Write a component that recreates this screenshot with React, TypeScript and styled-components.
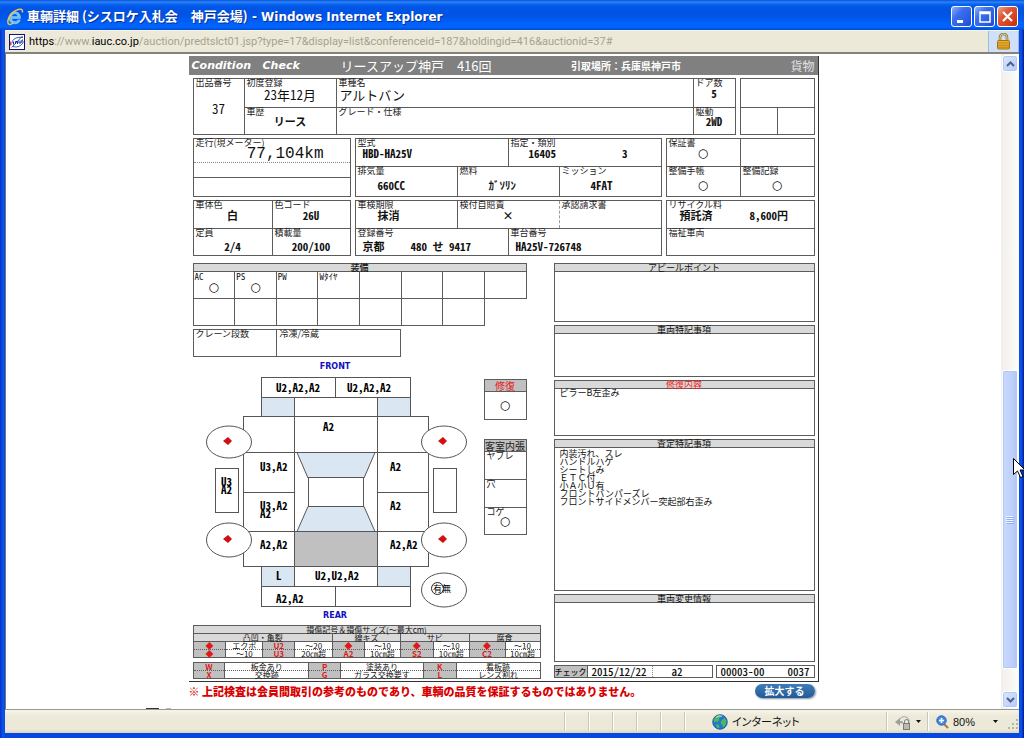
import React from "react";
import styled, { createGlobalStyle, css } from "styled-components";

const LINE = "#5c5c5c";
const JP = `"Noto Sans CJK JP", "Liberation Sans", sans-serif`;

const GlobalStyle = createGlobalStyle`
  * { box-sizing: border-box; }
  body { margin: 0; background: #fff; font-family: ${JP}; color: #111; }
  dl, dt, dd, h1, h2, p, ul { margin: 0; padding: 0; font-weight: inherit; }
  button { font: inherit; padding: 0; margin: 0; border: 0; background: none; color: inherit; }
  table { border-collapse: collapse; border-spacing: 0; }
  svg { display: block; }
`;

/* ---------- window frame ---------- */

const Window = styled.div`
  height: 100vh;
  min-height: 738px;
  display: flex;
  flex-direction: column;
  background: #0a45dd;
  overflow: hidden;
`;

const TitleBar = styled.header`
  flex: none;
  height: 30px;
  display: flex;
  align-items: center;
  gap: 3px;
  padding: 3px 6px 0;
  color: #fff;
  background: linear-gradient(#0a4fd8 0, #2a86f8 7%, #0b62ee 14%, #0056e6 24%, #0053e3 48%, #005df4 70%, #0066ff 88%, #005cf4 94%, #0048d0 100%);
`;

const WindowTitle = styled.h1`
  flex: 1;
  min-width: 0;
  font-size: 13px;
  line-height: 20px;
  font-weight: 700;
  white-space: pre;
  text-shadow: 1px 1px 0 #0a2f9a;
`;

const LatinTitle = styled.span`
  font-family: "DejaVu Sans", sans-serif;
  font-size: 12px;
`;

const WindowButtons = styled.div`
  display: flex;
  gap: 2px;
`;

const WindowButton = styled.button<{ $close?: boolean }>`
  width: 21px;
  height: 21px;
  display: grid;
  place-items: center;
  border: 1px solid #fff;
  border-radius: 3px;
  background: ${(p) =>
    p.$close
      ? "linear-gradient(135deg, #f0a58c 0, #e0583a 35%, #d23a17 80%, #b8300f 100%)"
      : "linear-gradient(135deg, #8db0fb 0, #3c6fee 35%, #2a5be2 75%, #2048c4 100%)"};
`;

const Frame = styled.div`
  flex: 1;
  min-height: 0;
  display: flex;
  flex-direction: column;
  padding: 0 5px 5px;
  background: linear-gradient(90deg, #0831c8 0, #0c55ee 3px, #0848e0 5px, #0848e0 calc(100% - 5px), #0c55ee calc(100% - 3px), #001a9c 100%);
`;

const AddressBar = styled.div`
  flex: none;
  height: 24px;
  display: flex;
  align-items: center;
  background: #ece9d8;
  border-top: 1px solid #f8f6ec;
  border-bottom: 2px solid #85827a;
  padding-left: 4px;
`;

const Url = styled.div`
  flex: 1;
  min-width: 0;
  margin-left: 4px;
  font: 11px/20px Roboto, "Liberation Sans", sans-serif;
  color: #a5a292;
  white-space: nowrap;
  b { font-weight: 400; color: #000; }
`;

const LockButton = styled.button`
  width: 31px;
  height: 21px;
  display: grid;
  place-items: center;
  border: 1px solid #9dbbe0;
  border-width: 0 1px;
  background: #cfe0f8;
`;

const Viewport = styled.div`
  flex: 1;
  min-height: 0;
  display: flex;
  background: #fff;
  border-left: 1px solid #77746b;
`;

const Page = styled.main`
  flex: 1;
  min-width: 0;
  overflow: hidden;
  padding-top: 2px;
`;

/* ---------- scroll bar ---------- */

const ScrollBar = styled.div`
  flex: none;
  width: 18px;
  display: flex;
  flex-direction: column;
  padding: 1px;
  background: linear-gradient(90deg, #f1efe8, #fdfdfa);
`;

const ScrollArrow = styled.button`
  flex: none;
  height: 17px;
  display: grid;
  place-items: center;
  border: 1px solid #fff;
  border-radius: 3px;
  background: linear-gradient(135deg, #dbe6fe, #b6cbfa);
  box-shadow: inset 0 0 0 1px #b4c8f6;
`;

const ScrollTrack = styled.div`
  flex: 1;
  display: flex;
  flex-direction: column;
`;

const ScrollSpace = styled.div<{ $share: number }>`
  flex: ${(p) => p.$share} 0 0;
`;

const ScrollThumb = styled.div`
  flex: 298 0 0;
  display: grid;
  place-items: center;
  border: 1px solid #fff;
  border-radius: 2px;
  background: linear-gradient(90deg, #c9d8fd, #bccffb 70%, #b0c5f5);
  box-shadow: inset 0 0 0 1px #b4c8f6;
`;

const Pointer = styled.svg`
  position: fixed;
  right: 0;
  top: 457px;
`;

/* ---------- inspection sheet ---------- */

const Content = styled.div`
  width: 100%;
  max-width: 630px;
  margin: 0 auto;
`;

const Sheet = styled.article`
  border-right: 1px solid #333;
  border-bottom: 1px solid #333;
  padding-bottom: 2px;
`;

const SheetHead = styled.header`
  height: 19px;
  display: grid;
  grid-template-columns: 150fr 232fr 201fr 44fr;
  align-items: center;
  padding: 0 3px;
  color: #fff;
  background: #808080;
  font-size: 13px;
  line-height: 19px;
  white-space: pre;
`;

const Brand = styled.span`
  font: italic 700 11px/19px "DejaVu Sans", sans-serif;
`;

const Place = styled.span`
  font-size: 10px;
  font-weight: 700;
`;

const Category = styled.span`
  font-size: 12px;
  text-align: right;
  color: #e4e4e4;
`;

const Blocks = styled.div`
  display: grid;
  gap: 3px;
  padding: 3px 3px 0 4px;
`;

const Row = styled.div<{ $cols: string }>`
  display: grid;
  grid-template-columns: ${(p) => p.$cols};
  gap: 4px;
`;

const Panel = styled.dl<{ $cols: string; $rows: string }>`
  display: grid;
  grid-template-columns: ${(p) => p.$cols};
  grid-template-rows: ${(p) => p.$rows};
  gap: 1px;
  border: 1px solid ${LINE};
  background: ${LINE};
`;

const Cell = styled.div<{ $span?: number; $tall?: boolean; $dash?: "left" | "bottom" }>`
  min-width: 0;
  display: flex;
  flex-direction: column;
  background: #fff;
  ${(p) => p.$span && css`grid-column: span ${p.$span};`}
  ${(p) => p.$tall && css`grid-row: span 2;`}
  ${(p) => p.$dash === "left" && css`margin-left: -1px; border-left: 1px dashed #999;`}
  ${(p) => p.$dash === "bottom" && css`margin-bottom: -1px; border-bottom: 1px dotted #888;`}
`;

const Label = styled.dt`
  flex: none;
  padding-left: 2px;
  font-size: 9px;
  line-height: 8px;
  color: #222;
  white-space: nowrap;
`;

type ValueProps = { $big?: boolean; $indent?: number; $gap?: number; $up?: boolean };

const Value = styled.dd<ValueProps>`
  flex: 1;
  display: flex;
  align-items: center;
  justify-content: ${(p) => (p.$indent ? "flex-start" : "center")};
  gap: ${(p) => p.$gap ?? 0}px;
  padding-left: ${(p) => p.$indent ?? 0}px;
  padding-bottom: ${(p) => (p.$up ? 7 : p.$big ? 5 : 0)}px;
  font-size: ${(p) => (p.$big ? 13 : 11)}px;
  line-height: 11px;
  font-weight: ${(p) => (p.$big ? 400 : 700)};
  font-feature-settings: "hwid" 1;
  white-space: pre;
`;

const Mileage = styled.dd`
  flex: 1;
  display: flex;
  align-items: center;
  justify-content: flex-end;
  padding-right: 26px;
  font: 16px/15px "Liberation Mono", monospace;
`;

const Circle = styled.span`
  font: 12px/11px "DejaVu Sans", sans-serif;
  color: #000;
`;

const show = (value: string) => (value === "○" ? <Circle>{value}</Circle> : value);

const Field = ({
  label,
  value,
  span,
  tall,
  dash,
  ...look
}: {
  label?: string;
  value?: string | string[];
  span?: number;
  tall?: boolean;
  dash?: "left" | "bottom";
} & ValueProps) => (
  <Cell $span={span} $tall={tall} $dash={dash}>
    {label && <Label>{label}</Label>}
    {value && (
      <Value {...look}>
        {Array.isArray(value) ? value.map((v) => <span key={v}>{v}</span>) : show(value)}
      </Value>
    )}
  </Cell>
);

/* ---------- lower half ---------- */

const Lower = styled.div`
  display: grid;
  grid-template-columns: 348fr 261fr;
  gap: 13px;
  padding: 7px 3px 0 4px;
`;

const LeftColumn = styled.div`
  display: flex;
  flex-direction: column;
`;

const RightColumn = styled.div`
  display: flex;
  flex-direction: column;
  gap: 3px;
`;

const EquipTable = styled.table`
  width: 96%;
  table-layout: fixed;
  th, td {
    border: 1px solid ${LINE};
    padding: 0;
    vertical-align: top;
  }
  thead th {
    height: 8px;
    font-size: 9px;
    line-height: 7px;
    font-weight: 500;
    background: #d9d9d9;
  }
  tbody td { height: 27px; }
`;

const EquipName = styled.div`
  font-size: 9px;
  line-height: 9px;
  padding-left: 1px;
  font-feature-settings: "hwid" 1;
`;

const Mark = styled.div`
  display: flex;
  justify-content: center;
  padding-top: 1px;
`;

const CranePanel = styled(Panel)`
  width: 60%;
  margin-top: 3px;
`;

const DiagramArea = styled.section`
  display: flex;
  justify-content: space-between;
  padding: 3px 14px 0 0;
`;

const Diagram = styled.svg`
  flex: 0 1 276px;
  min-width: 0;
  font-family: ${JP};
  .note {
    font-size: 11px;
    font-weight: 700;
    font-feature-settings: "hwid" 1;
  }
  .end {
    font: 700 8px "DejaVu Sans", sans-serif;
    fill: #1010c0;
    text-anchor: middle;
  }
`;

const Checks = styled.div`
  flex: none;
  width: 43px;
  padding-top: 19px;
  display: flex;
  flex-direction: column;
  gap: 19px;
`;

const CheckTitle = styled.dt<{ $red?: boolean }>`
  font-size: 10px;
  line-height: 11px;
  text-align: center;
  white-space: nowrap;
  background: #c0c0c0;
  color: ${(p) => (p.$red ? "#e82020" : "#222")};
`;

/* ---------- damage legend ---------- */

const Legend = styled.table`
  width: 100%;
  table-layout: fixed;
  border: 1px solid ${LINE};
  font-size: 8px;
  line-height: 7px;
  text-align: center;
  th, td {
    height: 8px;
    padding: 0;
    border: 1px solid ${LINE};
    font-weight: 400;
    white-space: nowrap;
  }
  tbody th {
    background: #c0c0c0;
    color: #e01818;
    font-weight: 700;
  }
  tbody th, tbody td { border-style: dotted solid; }
`;

const LegendTitle = styled.th`
  background: #d9d9d9;
`;

const LegendGroup = styled.th`
  background: #d9d9d9;
`;

const CodeTable = styled(Legend)`
  margin-top: 4px;
`;

/* ---------- right column ---------- */

const Box = styled.section<{ $height: number }>`
  min-height: ${(p) => p.$height}px;
  border: 1px solid ${LINE};
`;

const BoxTitle = styled.h2<{ $red?: boolean }>`
  height: 8px;
  border-bottom: 1px solid ${LINE};
  background: #d9d9d9;
  font-size: 9px;
  line-height: 7px;
  text-align: center;
  color: ${(p) => (p.$red ? "#f02424" : "#111")};
`;

const Remark = styled.p`
  padding-left: 5px;
  font-size: 9px;
  line-height: 8px;
  color: #111;
`;

const Remarks = styled.div`
  padding-top: 2px;
`;

const CheckRow = styled.div`
  display: grid;
  grid-template-columns: 159fr 99fr;
  gap: 3px;
`;

const CheckPanel = styled.div<{ $cols: string }>`
  height: 13px;
  display: grid;
  grid-template-columns: ${(p) => p.$cols};
  align-items: stretch;
  border: 1px solid ${LINE};
  font-size: 11px;
  line-height: 11px;
  font-weight: 500;
  font-feature-settings: "hwid" 1;
  white-space: nowrap;
  span { padding-left: 4px; }
  span + span + span { padding-left: 18px; border-left: 1px dotted #888; }
`;

const CheckLabel = styled.span`
  && { padding: 0; }
  font-size: 8px;
  text-align: center;
  background: #c0c0c0;
  border-right: 1px solid ${LINE};
`;

const Serial = styled.div`
  height: 13px;
  display: flex;
  justify-content: space-between;
  padding: 0 4px;
  border: 1px solid ${LINE};
  font-size: 11px;
  line-height: 11px;
  font-weight: 500;
  font-feature-settings: "hwid" 1;
`;

/* ---------- below the sheet ---------- */

const Notice = styled.div`
  display: flex;
  justify-content: space-between;
  align-items: center;
  height: 17px;
  padding-right: 4px;
`;

const Warning = styled.p`
  font-size: 11px;
  line-height: 16px;
  font-weight: 900;
  color: #d80000;
`;

const EnlargeButton = styled.button`
  width: 60px;
  height: 14px;
  border-radius: 7px;
  background: linear-gradient(#3f7cba, #235a96);
  box-shadow: 1px 1px 2px #8a96a4;
  color: #fff;
  font-size: 10px;
  line-height: 13px;
  font-weight: 700;
`;

const NextLine = styled.div`
  height: 1px;
  margin: 9px 0 0 140px;
  display: flex;
  gap: 7px;
  i { width: 13px; background: #333; }
  i + i { width: 5px; background: #bbb; }
`;

/* ---------- status bar ---------- */

const StatusBar = styled.footer`
  flex: none;
  height: 24px;
  display: flex;
  align-items: stretch;
  border-top: 1px solid #9b988c;
  background: linear-gradient(#f6f4ea, #ece9d8 30%, #ece9d8 85%, #dad6c4);
  font-size: 12px;
  line-height: 23px;
`;

const StatusPane = styled.div<{ $width: number }>`
  flex: 0 1 ${(p) => p.$width}px;
  display: flex;
  align-items: center;
  gap: 4px;
  margin: 2px 0;
  border-left: 1px solid #cbc7b4;
  box-shadow: inset 1px 0 0 #fff;
`;

const StatusMessage = styled.div`
  flex: 1;
`;

const Zone = styled(StatusPane)`
  padding-left: 27px;
  font-size: 11px;
  font-feature-settings: "palt" 1;
`;

const StatusButton = styled.button`
  display: flex;
  align-items: center;
  gap: 4px;
  padding-left: 8px;
  font: 11px/18px "Liberation Sans", sans-serif;
`;

const ZoomText = styled.span`
  width: 36px;
  text-align: left;
`;

const Grip = styled.svg`
  margin-left: auto;
  align-self: flex-end;
`;

const IeLogo = () => (
  <svg width="18" height="18" viewBox="0 0 18 18" aria-hidden="true">
    <path d="M14.5 10.5H5.6c.2 2 1.600 3 3.300 3 1.300 0 2.300-.6 2.900-1.600h2.500c-.8 2.500-2.900 3.900-5.400 3.900-3.400 0-5.900-2.500-5.900-5.900s2.500-6.100 5.900-6.100c3.600 0 5.900 2.800 5.600 6.700zM5.700 8.400h6.100C11.500 6.700 10.400 5.800 8.800 5.800S6 6.700 5.700 8.400z" fill="#6cc2f6" stroke="#cdeaff" strokeWidth=".4" />
    <path d="M3.500 16.500C-.5 15.500 3 6 10 2.300 14 .3 17.300.8 16.300 4.500M3.500 16.500c1.200.3 2.500-.5 3.800-1.300" fill="none" stroke="#ecc54e" strokeWidth="1.500" />
  </svg>
);

const SiteIcon = () => (
  <svg width="16" height="16" viewBox="0 0 16 16" aria-hidden="true">
    <rect x=".5" y=".5" width="15" height="15" fill="#fff" stroke="#10107c" />
    <path d="M3 9C3 5 8 2.500 14 3.500M4 12.500c5 1.500 9-1 10.500-5M2.500 13.500L13.500 2" fill="none" stroke="#2a55b0" strokeWidth="1" />
    <path d="M4.500 7.500v3M6.500 10V7.500h2V10M10 6.500v2.500h2V6.500M14 6h-1v2.500" fill="none" stroke="#1a2e98" strokeWidth="1" />
    <path d="M1 7l2 3-2 2z" fill="#e33" />
  </svg>
);

const LockIcon = () => (
  <svg width="15" height="17" viewBox="0 0 15 17" aria-hidden="true">
    <path d="M4 8V4.500a3.500 3.500 0 0 1 7 0V8" fill="none" stroke="#8a7a3a" strokeWidth="2.600" />
    <path d="M4 8V4.500a3.500 3.500 0 0 1 7 0V8" fill="none" stroke="#e6d690" strokeWidth="1" />
    <rect x="1.500" y="7.500" width="12" height="8.500" rx="1" fill="#e9ae2a" stroke="#a87412" />
    <path d="M2 10h11M2 12.300h11M2 14.300h11" stroke="#b9801a" strokeWidth=".8" />
  </svg>
);

const Globe = () => (
  <svg width="16" height="16" viewBox="0 0 16 16" aria-hidden="true">
    <circle cx="8" cy="8" r="7.300" fill="#2677cf" stroke="#1b4f96" strokeWidth=".8" />
    <path d="M2 5c1.500-2.600 4-4 6-3.800l1 1.600-2 1.400.4 2L5 8 3.500 7.500 2 9zM9.500 6.500l3-2.500 2 3.200-1.200 4.600-2.300 1.400-1-3-1.500-1zM4.500 10l2.500 1 .4 2.200-1 1.400C4.800 14 3.800 12 4.500 10z" fill="#4cb85a" />
    <path d="M4 3.500C6 1.800 8.500 1.600 10 2.400" stroke="#cfeaff" strokeWidth="1.200" fill="none" opacity=".7" />
  </svg>
);

const Caret = () => (
  <svg width="5" height="3" viewBox="0 0 5 3" aria-hidden="true">
    <path d="M0 0h5L2.500 3z" fill="#111" />
  </svg>
);

const wheels: [number, number, number][] = [
  [36, 82, 16],
  [251, 82, 16],
  [36, 180, 17],
  [251, 180, 17],
];

const notes: [number, number, string][] = [
  [83, 32, "U2,A2,A2"],
  [154, 32, "U2,A2,A2"],
  [130, 71, "A2"],
  [67, 111, "U3,A2"],
  [197, 111, "A2"],
  [28, 126, "U3"],
  [28, 134, "A2"],
  [67, 150, "U3,A2"],
  [67, 158, "A2"],
  [197, 150, "A2"],
  [67, 189, "A2,A2"],
  [197, 189, "A2,A2"],
  [83, 220, "L"],
  [122, 220, "U2,U2,A2"],
  [83, 243, "A2,A2"],
];

const CarDiagram = () => (
  <Diagram width="276" height="265" viewBox="0 0 276 265" role="img" aria-label="車両展開図">
    <text className="end" x="142" y="9">FRONT</text>
    <text className="end" x="142" y="258">REAR</text>
    <g fill="#fff" stroke="#555" strokeWidth="1">
      <rect x="68.500" y="17.500" width="149" height="20" />
      <path d="M142.500 17.500v20" />
      <rect x="68.500" y="37.500" width="149" height="19" />
      <rect x="68.500" y="37.500" width="33" height="19" fill="#dbe6f3" />
      <rect x="184.500" y="37.500" width="33" height="19" fill="#dbe6f3" />
      <rect x="50.500" y="56.500" width="185" height="150" />
      <path d="M50.500 92.500h51M50.500 132.500h51M50.500 171.500h51M184.500 92.500h51M184.500 132.500h51M184.500 171.500h51" />
      <rect x="101.500" y="56.500" width="83" height="36" />
      <rect x="101.500" y="92.500" width="83" height="79" />
      <path d="M104 92.500h78l-11 25.500h-56z" fill="#dbe6f3" />
      <path d="M115 146.500h56l11 25h-78z" fill="#dbe6f3" />
      <rect x="115.500" y="117.500" width="55" height="29" />
      <rect x="101.500" y="171.500" width="83" height="35" fill="#c0c0c0" />
      <rect x="68.500" y="206.500" width="149" height="20" />
      <rect x="68.500" y="206.500" width="33" height="20" fill="#dbe6f3" />
      <rect x="184.500" y="206.500" width="33" height="20" fill="#dbe6f3" />
      <rect x="68.500" y="226.500" width="149" height="20" />
      <path d="M142.500 226.500v20" />
      <rect x="22.500" y="108.500" width="23" height="44" />
      <rect x="240.500" y="108.500" width="23" height="44" />
      {wheels.map(([x, y, r]) => (
        <ellipse key={`${x}-${y}`} cx={x} cy={y} rx="22.500" ry={r} />
      ))}
      <ellipse cx="251" cy="230" rx="22.500" ry="17" />
    </g>
    {wheels.map(([x, y]) => (
      <path key={`${x}-${y}`} d={`M${x - 6} ${y - 1}l5-4 4 4-4 4z`} fill="#d01010" />
    ))}
    {notes.map(([x, y, t]) => (
      <text key={`${x}-${y}`} className="note" x={x} y={y}>{t}</text>
    ))}
    <text x="240" y="232" fontSize="9">有無</text>
    <circle cx="244.500" cy="228.500" r="6" fill="none" stroke="#222" />
  </Diagram>
);

const codes = [
  ["W", "板金あり", "P", "塗装あり", "K", "看板跡"],
  ["X", "交換跡", "G", "ガラス交換要す", "L", "レンズ割れ"],
];

const sizes = [
  ["◆", "エクボ", "U2", "～20", "◆", "～10", "◆", "～10", "◆", "～10"],
  ["◆", "～10", "U3", "20㎝超", "A2", "10㎝超", "S2", "10㎝超", "C2", "10㎝超"],
];

const pairRow = (row: string[], i: number) => (
  <tr key={i}>
    {row.map((t, c) => (c % 2 === 0 ? <th key={c} scope="row">{t}</th> : <td key={c}>{t}</td>))}
  </tr>
);

const Columns = ({ widths }: { widths: number[] }) => {
  const total = widths.reduce((a, b) => a + b, 0);
  return (
    <colgroup>
      {widths.map((w, i) => (
        <col key={i} style={{ width: `${(w / total) * 100}%` }} />
      ))}
    </colgroup>
  );
};

const equipment = [["AC", true], ["PS", true], ["PW", false], ["Wﾀｲﾔ", false], ["", false], ["", false], ["", false], ["", false]] as [string, boolean][];

const remarks = ["内装汚れ、スレ", "ハンドルハゲ", "シートしみ", "ＥＴＣ付", "小Ａ小Ｕ有", "フロントバンパーズレ", "フロントサイドメンバー突起部右歪み"];

export default function App() {
  return (
    <Window lang="ja">
      <GlobalStyle />
      <TitleBar>
        <IeLogo />
        <WindowTitle>
          車輌詳細 (シスロケ入札会　神戸会場)<LatinTitle> - Windows Internet Explorer</LatinTitle>
        </WindowTitle>
        <WindowButtons>
          <WindowButton aria-label="最小化">
            <svg width="15" height="15" viewBox="0 0 15 15"><path d="M3 11h6v3H3z" fill="#fff" /></svg>
          </WindowButton>
          <WindowButton aria-label="最大化">
            <svg width="15" height="15" viewBox="0 0 15 15"><path d="M3 3h10v10H3zM3 4.500h10" fill="none" stroke="#fff" strokeWidth="1.500" /></svg>
          </WindowButton>
          <WindowButton $close aria-label="閉じる">
            <svg width="15" height="15" viewBox="0 0 15 15"><path d="M3 3l9 9M12 3l-9 9" stroke="#fff" strokeWidth="2.200" /></svg>
          </WindowButton>
        </WindowButtons>
      </TitleBar>
      <Frame>
        <AddressBar>
          <SiteIcon />
          <Url>
            <b>https</b>://www.<b>iauc.co.jp</b>/auction/predtslct01.jsp?type=17&amp;display=list&amp;conferenceid=187&amp;holdingid=416&amp;auctionid=37#
          </Url>
          <LockButton aria-label="セキュリティ報告"><LockIcon /></LockButton>
        </AddressBar>
        <Viewport>
          <Page>
            <Content>
              <Sheet>
                <SheetHead>
                  <Brand>{"Condition   Check"}</Brand>
                  <span>リースアップ神戸　416回</span>
                  <Place>引取場所：兵庫県神戸市</Place>
                  <Category>貨物</Category>
                </SheetHead>
                <Blocks>
                  <Row $cols="543fr 75fr">
                    <Panel $cols="50fr 91fr 356fr 41fr" $rows="28px 26px">
                      <Field label="出品番号" value="37" tall $big />
                      <Field label="初度登録" value="23年12月" $big />
                      <Field label="車種名" value="アルトバン" $big $indent={3} />
                      <Field label="ドア数" value="5" $up />
                      <Field label="車歴" value="リース" $up />
                      <Field label="グレード・仕様" />
                      <Field label="駆動" value="2WD" $up />
                    </Panel>
                    <Panel $cols="1fr 1fr" $rows="28px 26px">
                      <Field span={2} />
                      <Field />
                      <Field />
                    </Panel>
                  </Row>
                  <Row $cols="158fr 307fr 149fr">
                    <Panel $cols="1fr" $rows="23px 14px 18px">
                      <Cell $dash="bottom">
                        <Label>走行(現メーター)</Label>
                        <Mileage>77,104km</Mileage>
                      </Cell>
                      <Field />
                      <Field />
                    </Panel>
                    <Panel $cols="repeat(6, minmax(0, 1fr))" $rows="27px 29px">
                      <Field span={3} label="型式" value="HBD-HA25V" $indent={7} $up />
                      <Field span={3} label="指定・類別" value={["16405", "3"]} $indent={20} $gap={66} $up />
                      <Field span={2} label="排気量" value="660CC" $indent={22} />
                      <Field span={2} label="燃料" value="ｶﾞｿﾘﾝ" $indent={31} />
                      <Field span={2} label="ミッション" value="4FAT" $indent={31} />
                    </Panel>
                    <Panel $cols="1fr 1fr" $rows="27px 29px">
                      <Field label="保証書" value="○" $up />
                      <Field />
                      <Field label="整備手帳" value="○" />
                      <Field label="整備記録" value="○" />
                    </Panel>
                  </Row>
                  <Row $cols="158fr 307fr 149fr">
                    <Panel $cols="78fr 77fr" $rows="27px 26px">
                      <Field label="車体色" value="白" $up />
                      <Field label="色コード" value="26U" $up />
                      <Field label="定員" value="2/4" />
                      <Field label="積載量" value="200/100" />
                    </Panel>
                    <Panel $cols="repeat(6, minmax(0, 1fr))" $rows="27px 26px">
                      <Field span={2} label="車検期限" value="抹消" $indent={22} $up />
                      <Field span={2} label="検付自賠責" value="×" $up />
                      <Field span={2} label="承認請求書" dash="left" />
                      <Field span={3} label="登録番号" value={["京都", "480 せ 9417"]} $indent={7} $gap={26} />
                      <Field span={3} label="車台番号" value="HA25V-726748" $indent={7} />
                    </Panel>
                    <Panel $cols="1fr" $rows="27px 26px">
                      <Field label="リサイクル料" value={["預託済", "8,600円"]} $indent={13} $gap={37} $up />
                      <Field label="福祉車両" />
                    </Panel>
                  </Row>
                </Blocks>
                <Lower>
                  <LeftColumn>
                    <EquipTable>
                      <thead>
                        <tr><th colSpan={8}>装備</th></tr>
                      </thead>
                      <tbody>
                        <tr>
                          {equipment.map(([name, on], i) => (
                            <td key={i}>
                              {name && <EquipName>{name}</EquipName>}
                              {on && <Mark><Circle>○</Circle></Mark>}
                            </td>
                          ))}
                        </tr>
                        <tr>{equipment.slice(1).map((_, i) => <td key={i} />)}</tr>
                      </tbody>
                    </EquipTable>
                    <CranePanel $cols="83fr 123fr" $rows="26px">
                      <Field label="クレーン段数" />
                      <Field label="冷凍/冷蔵" />
                    </CranePanel>
                    <DiagramArea>
                      <CarDiagram />
                      <Checks>
                        <Panel $cols="1fr" $rows="11px 27px">
                          <CheckTitle $red>修復</CheckTitle>
                          <Field value="○" />
                        </Panel>
                        <Panel $cols="1fr" $rows="11px 27px 27px 26px">
                          <CheckTitle>客室内張</CheckTitle>
                          <Field label="ヤブレ" />
                          <Field label="穴" />
                          <Field label="コゲ" value="○" $up />
                        </Panel>
                      </Checks>
                    </DiagramArea>
                    <Legend>
                      <Columns widths={[33, 37, 32, 38, 32, 36, 33, 36, 36, 35]} />
                      <thead>
                        <tr><LegendTitle colSpan={10}>損傷記号＆損傷サイズ(～最大cm)</LegendTitle></tr>
                        <tr>
                          <LegendGroup colSpan={4}>凸凹・亀裂</LegendGroup>
                          <LegendGroup colSpan={2}>線キズ</LegendGroup>
                          <LegendGroup colSpan={2}>サビ</LegendGroup>
                          <LegendGroup colSpan={2}>腐食</LegendGroup>
                        </tr>
                      </thead>
                      <tbody>{sizes.map(pairRow)}</tbody>
                    </Legend>
                    <CodeTable>
                      <Columns widths={[32, 84, 32, 83, 33, 84]} />
                      <tbody>{codes.map(pairRow)}</tbody>
                    </CodeTable>
                  </LeftColumn>
                  <RightColumn>
                    <Box $height={59}><BoxTitle>アピールポイント</BoxTitle></Box>
                    <Box $height={52}><BoxTitle>車両特記事項</BoxTitle></Box>
                    <Box $height={56}>
                      <BoxTitle $red>修復内容</BoxTitle>
                      <Remark>ピラーB左歪み</Remark>
                    </Box>
                    <Box $height={152}>
                      <BoxTitle>査定特記事項</BoxTitle>
                      <Remarks>
                        {remarks.map((r) => <Remark key={r}>{r}</Remark>)}
                      </Remarks>
                    </Box>
                    <Box $height={68}><BoxTitle>車両変更情報</BoxTitle></Box>
                    <CheckRow>
                      <CheckPanel $cols="32fr 66fr 60fr">
                        <CheckLabel>チェック</CheckLabel>
                        <span>2015/12/22</span>
                        <span>a2</span>
                      </CheckPanel>
                      <Serial>
                        <span>00003-00</span>
                        <span>0037</span>
                      </Serial>
                    </CheckRow>
                  </RightColumn>
                </Lower>
              </Sheet>
              <Notice>
                <Warning>※ 上記検査は会員間取引の参考のものであり、車輌の品質を保証するものではありません。</Warning>
                <EnlargeButton>拡大する</EnlargeButton>
              </Notice>
            </Content>
            <NextLine><i /><i /></NextLine>
          </Page>
          <ScrollBar>
            <ScrollArrow aria-label="上へ">
              <svg width="9" height="6" viewBox="0 0 9 6"><path d="M1 5l3.500-3.500L8 5" fill="none" stroke="#4d6185" strokeWidth="2" /></svg>
            </ScrollArrow>
            <ScrollTrack>
              <ScrollSpace $share={299} />
              <ScrollThumb>
                <svg width="8" height="8" viewBox="0 0 8 8"><path d="M0 .5h7M0 2.500h7M0 4.500h7M0 6.500h7" stroke="#eef4fe" /><path d="M1 1.500h7M1 3.500h7M1 5.500h7M1 7.500h7" stroke="#8cb0f8" /></svg>
              </ScrollThumb>
              <ScrollSpace $share={22} />
            </ScrollTrack>
            <ScrollArrow aria-label="下へ">
              <svg width="9" height="6" viewBox="0 0 9 6"><path d="M1 1l3.500 3.500L8 1" fill="none" stroke="#4d6185" strokeWidth="2" /></svg>
            </ScrollArrow>
          </ScrollBar>
        </Viewport>
        <StatusBar>
          <StatusMessage />
          <StatusPane $width={24} />
          <StatusPane $width={24} />
          <StatusPane $width={24} />
          <StatusPane $width={24} />
          <StatusPane $width={24} />
          <Zone $width={202}>
            <Globe />
            インターネット
          </Zone>
          <StatusPane $width={41}>
            <StatusButton aria-label="保護モード">
              <svg width="17" height="16" viewBox="0 0 17 16">
                <path d="M5 5a5 5 0 0 1 9 1v4" fill="#e8e8e4" stroke="#a8a8a2" />
                <path d="M0 8l5-4v3l3 .5v2L5 9v3z" fill="#a0a09a" />
                <rect x="8.500" y="9.500" width="6" height="6" fill="#b9b9b3" stroke="#7c7c76" />
                <path d="M9.500 9V7.500a2 2 0 0 1 4 0V9" fill="none" stroke="#7c7c76" />
              </svg>
              <Caret />
            </StatusButton>
          </StatusPane>
          <StatusPane $width={92}>
            <StatusButton aria-label="拡大レベルの変更">
              <svg width="13" height="14" viewBox="0 0 13 14">
                <path d="M8 9l4 4" stroke="#a07840" strokeWidth="2" />
                <circle cx="5.500" cy="5.500" r="4.700" fill="#3f8ae4" stroke="#2a62b4" />
                <path d="M5.500 3v5M3 5.500h5" stroke="#fff" strokeWidth="1.600" />
              </svg>
              <ZoomText>80%</ZoomText>
              <Caret />
            </StatusButton>
            <Grip width="12" height="12" viewBox="0 0 12 12">
              <path d="M9 0h2v2H9zM5 4h2v2H5zM9 4h2v2H9zM1 8h2v2H1zM5 8h2v2H5zM9 8h2v2H9z" fill="#b8b4a2" />
            </Grip>
          </StatusPane>
        </StatusBar>
      </Frame>
      <Pointer width="12" height="22" viewBox="0 0 12 22" aria-hidden="true">
        <path d="M1.500 1.500v16l4-3.500 3 6.500 2.500-1-3-6.500h5z" fill="#fff" stroke="#000" />
      </Pointer>
    </Window>
  );
}
